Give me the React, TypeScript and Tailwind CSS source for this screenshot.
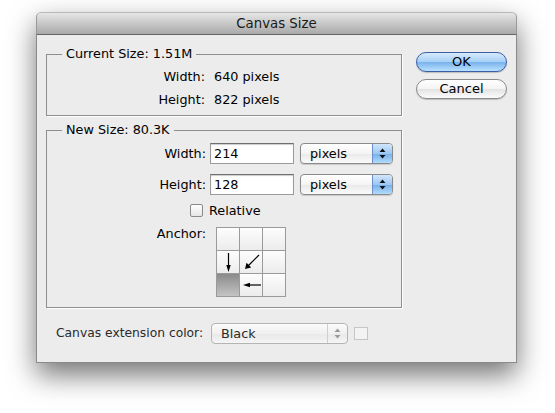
import React from 'react';

const FONT = { fontFamily: '"DejaVu Sans", "Liberation Sans", sans-serif' };

function Group({ title, className, children }: { title: string; className?: string; children: React.ReactNode }) {
  return (
    <div className={`relative border border-[#8e8e8e] shadow-[1px_1px_0_#ffffff] ${className ?? ''}`}>
      <span className="absolute -top-[9px] left-[15px] bg-[#ececec] px-[4px] leading-[16px] whitespace-nowrap">
        {title}
      </span>
      {children}
    </div>
  );
}

function StepperArrows({ color }: { color: string }) {
  return (
    <svg width="7" height="11" viewBox="0 0 7 11">
      <polygon points="3.5,0.5 6.5,4 0.5,4" fill={color} />
      <polygon points="0.5,7 6.5,7 3.5,10.5" fill={color} />
    </svg>
  );
}

function PopUp({ value, width }: { value: string; width: string }) {
  return (
    <div
      className={`flex h-[21px] ${width} overflow-hidden rounded-[4px] border border-[#8a8a8a] bg-[linear-gradient(#ffffff,#f4f4f4_50%,#e9e9e9_51%,#fafafa)] shadow-[0_1px_1px_rgba(0,0,0,0.15)]`}
    >
      <span className="flex-1 pl-[9px] leading-[19px]">{value}</span>
      <span className="flex w-[20px] items-center justify-center border-l border-[#6d8fc9] bg-[linear-gradient(#d2e6fb,#9cc8f3_50%,#74aeea_51%,#b2dbfb)]">
        <StepperArrows color="#111" />
      </span>
    </div>
  );
}

function TextField({ value }: { value: string }) {
  return (
    <div className="h-[21px] w-[84px] border border-[#9b9b9b] border-t-[#6f6f6f] bg-white pl-[3px] leading-[19px] shadow-[inset_0_1px_1px_rgba(0,0,0,0.2)]">
      {value}
    </div>
  );
}

function AnchorCell({ selected, children }: { selected?: boolean; children?: React.ReactNode }) {
  return (
    <div
      className={`h-[22px] w-[22px] ${
        selected
          ? 'bg-[linear-gradient(#8a8a8a,#c4c4c4)]'
          : 'bg-[linear-gradient(#fdfdfd,#ececec)]'
      }`}
    >
      {children}
    </div>
  );
}

function AnchorGrid() {
  return (
    <div className="grid w-[70px] grid-cols-3 gap-px bg-[#9a9a9a] p-px">
      <AnchorCell />
      <AnchorCell />
      <AnchorCell />
      <AnchorCell>
        <svg width="22" height="22" viewBox="0 0 22 22">
          <line x1="11.5" y1="2" x2="11.5" y2="16" stroke="#000" strokeWidth="1.2" />
          <polygon points="9.3,14 13.7,14 11.5,21" fill="#000" />
        </svg>
      </AnchorCell>
      <AnchorCell>
        <svg width="22" height="22" viewBox="0 0 22 22">
          <line x1="19" y1="4" x2="8" y2="15" stroke="#000" strokeWidth="1.2" />
          <polygon points="5,18 6.5,11.8 11.2,16.5" fill="#000" />
        </svg>
      </AnchorCell>
      <AnchorCell />
      <AnchorCell selected />
      <AnchorCell>
        <svg width="22" height="22" viewBox="0 0 22 22">
          <line x1="8" y1="11" x2="21" y2="11" stroke="#000" strokeWidth="1.2" />
          <polygon points="3,11 10,8.8 10,13.2" fill="#000" />
        </svg>
      </AnchorCell>
      <AnchorCell />
    </div>
  );
}

function AquaButton({ label, primary }: { label: string; primary?: boolean }) {
  return (
    <button
      className={`h-[20px] w-[91px] rounded-full border text-[13px] leading-[18px] shadow-[0_1px_1px_rgba(0,0,0,0.2)] ${
        primary
          ? 'border-[#3b5fa6] bg-[linear-gradient(#d6eafd,#a6cff6_50%,#78b3ed_51%,#b9e0fd)]'
          : 'border-[#8a8a8a] bg-[linear-gradient(#ffffff,#f4f4f4_50%,#e3e3e3_51%,#fbfbfb)]'
      }`}
    >
      {label}
    </button>
  );
}

export default function App() {
  return (
    <div className="min-h-[413px] w-[555px] bg-white pt-[12px] pl-[36px] text-[12.8px] text-black" style={FONT}>
      <div className="flex h-[351px] w-[481px] flex-col rounded-t-[5px] shadow-[0_12px_28px_rgba(0,0,0,0.55)]">
        <div className="h-[23px] rounded-t-[5px] border-x border-t border-b border-x-[#9a9a9a] border-t-[#b8b8b8] border-b-[#666] bg-[linear-gradient(#e6e6e6,#a9a9a9)] text-center text-[13.3px] leading-[22px] text-[#1a1a1a]">
          Canvas Size
        </div>

        <div className="flex flex-1 border-x border-b border-[#8a8a8a] bg-[#ececec] px-[9px] pt-[11px]">
          <div className="flex w-[357px] flex-col">
            <Group title="Current Size: 1.51M" className="mt-[8px] pt-[13px] pb-[7px]">
              <div className="flex leading-[17px]">
                <span className="w-[158px] text-right">Width:</span>
                <span className="ml-[9px]">640 pixels</span>
              </div>
              <div className="mt-[6px] flex leading-[17px]">
                <span className="w-[158px] text-right">Height:</span>
                <span className="ml-[9px]">822 pixels</span>
              </div>
            </Group>

            <Group title="New Size: 80.3K" className="mt-[14px] pt-[12px] pb-[10px]">
              <div className="flex items-center">
                <span className="w-[159px] text-right">Width:</span>
                <div className="ml-[4px]">
                  <TextField value="214" />
                </div>
                <div className="ml-[6px]">
                  <PopUp value="pixels" width="w-[93px]" />
                </div>
              </div>
              <div className="mt-[10px] flex items-center">
                <span className="w-[159px] text-right">Height:</span>
                <div className="ml-[4px]">
                  <TextField value="128" />
                </div>
                <div className="ml-[6px]">
                  <PopUp value="pixels" width="w-[93px]" />
                </div>
              </div>
              <div className="mt-[9px] flex h-[13px] items-center">
                <span className="ml-[143px] h-[13px] w-[13px] rounded-[2px] border border-[#8a8a8a] bg-[linear-gradient(#ffffff,#e6e6e6)]" />
                <span className="ml-[6px] leading-[16px]">Relative</span>
              </div>
              <div className="mt-[10px] flex items-start">
                <span className="-mt-px w-[159px] text-right leading-[16px]">Anchor:</span>
                <div className="ml-[10px]">
                  <AnchorGrid />
                </div>
              </div>
            </Group>

            <div className="mt-[15px] flex items-center">
              <span className="w-[165px] pl-[10px] text-[12.3px] whitespace-nowrap text-[#2a2a2a]">
                Canvas extension color:
              </span>
              <div className="flex h-[21px] w-[137px] overflow-hidden rounded-[4px] border border-[#b4b4b4] bg-[linear-gradient(#fbfbfb,#f0f0f0_50%,#e8e8e8_51%,#f5f5f5)]">
                <span className="flex-1 pl-[9px] leading-[19px] text-[#2a2a2a]">Black</span>
                <span className="flex w-[20px] items-center justify-center border-l border-[#cfcfcf]">
                  <StepperArrows color="#9a9a9a" />
                </span>
              </div>
              <span className="ml-[6px] h-[13px] w-[14px] border border-[#c6c6c6] bg-[#f3f3f3]" />
            </div>
          </div>

          <div className="ml-[14px] flex flex-col gap-[7px] pt-[6px]">
            <AquaButton label="OK" primary />
            <AquaButton label="Cancel" />
          </div>
        </div>
      </div>
    </div>
  );
}
